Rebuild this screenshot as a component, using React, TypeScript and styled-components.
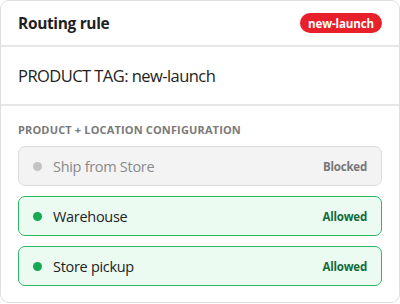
import React from 'react';
import styled, { createGlobalStyle } from 'styled-components';

const Global = createGlobalStyle`
  body {
    margin: 0;
    background: #ffffff;
    font-family: "Open Sans", "Noto Sans", sans-serif;
  }
`;

// card shell
const Card = styled.div`
  box-sizing: border-box;
  width: 400px;
  height: 303px;
  border: 1px solid #dedede;
  border-radius: 9px;
  background: #fff;
  overflow: hidden;
`;

const Header = styled.div`
  display: flex;
  align-items: center;
  justify-content: space-between;
  height: 44px;
  padding: 0 17px 0 17px;
  border-bottom: 2px solid #e6e6e6;
`;

const Title = styled.h1`
  margin: 0;
  font-size: 15.5px;
  font-weight: 700;
  letter-spacing: -0.35px;
  color: #1f1f1f;
`;

const Badge = styled.span`
  display: inline-flex;
  align-items: center;
  justify-content: center;
  height: 20px;
  width: 82px;
  border-radius: 10px;
  background: #e8202a;
  color: #fff;
  font-size: 11.5px;
  font-weight: 700;
  letter-spacing: -0.1px;
`;

const TagRow = styled.div`
  display: flex;
  align-items: center;
  height: 57px;
  padding: 0 17px;
  font-size: 16.5px;
  letter-spacing: -0.55px;
  color: #222;
  border-bottom: 2px solid #e6e6e6;
`;

const Section = styled.div`
  padding: 16px 17px 0 17px;
`;

const Label = styled.div`
  font-size: 11px;
  font-weight: 700;
  letter-spacing: 0.15px;
  color: #7a7a7a;
  text-transform: uppercase;
  margin-bottom: 9px;
`;

const List = styled.div`
  display: flex;
  flex-direction: column;
  gap: 10px;
`;

const Row = styled.div<{ $on: boolean }>`
  box-sizing: border-box;
  display: flex;
  align-items: center;
  height: 40px;
  padding: 0 14px 0 14px;
  border-radius: 7px;
  border: 1px solid ${p => (p.$on ? '#2bb766' : '#dcdcdc')};
  background: ${p => (p.$on ? '#ecfbf2' : '#f3f3f4')};
`;

const Dot = styled.span<{ $on: boolean }>`
  width: 9px;
  height: 9px;
  border-radius: 50%;
  background: ${p => (p.$on ? '#16a853' : '#c3c3c3')};
  margin-right: 11px;
`;

const Name = styled.span<{ $on: boolean }>`
  flex: 1;
  font-size: 14.5px;
  font-weight: 500;
  letter-spacing: -0.3px;
  color: ${p => (p.$on ? '#222' : '#8a8a8a')};
`;

const Status = styled.span<{ $on: boolean }>`
  font-size: 11.5px;
  font-weight: 700;
  letter-spacing: -0.2px;
  color: ${p => (p.$on ? '#136b38' : '#777')};
`;

const rows = [
  { name: 'Ship from Store', on: false },
  { name: 'Warehouse', on: true },
  { name: 'Store pickup', on: true },
];

export default function App() {
  return (
    <>
      <Global />
      <Card>
        <Header>
          <Title>Routing rule</Title>
          <Badge>new-launch</Badge>
        </Header>
        <TagRow>PRODUCT TAG: new-launch</TagRow>
        <Section>
          <Label>Product + Location configuration</Label>
          <List>
            {rows.map(r => (
              <Row key={r.name} $on={r.on}>
                <Dot $on={r.on} />
                <Name $on={r.on}>{r.name}</Name>
                <Status $on={r.on}>{r.on ? 'Allowed' : 'Blocked'}</Status>
              </Row>
            ))}
          </List>
        </Section>
      </Card>
    </>
  );
}
